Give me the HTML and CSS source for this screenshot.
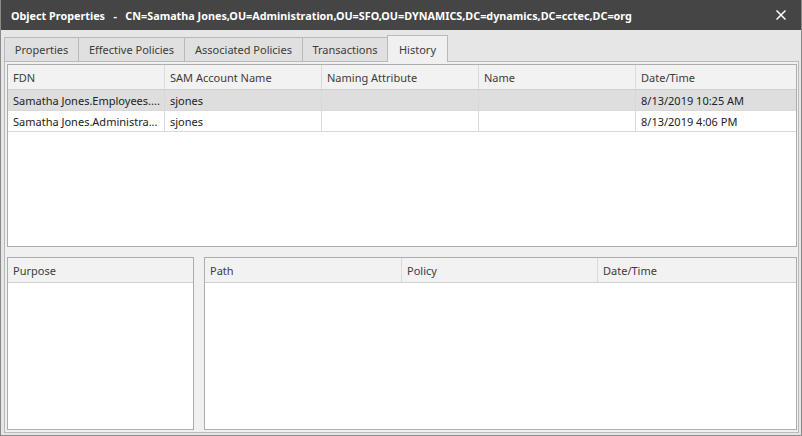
FILE: index.html
```html
<html>
	<head>
		<title>Object Properties</title>
		<link rel="stylesheet" href="styles.css">
	</head>
	<body>
		<div class="window">
			<div class="titlebar">
				<span class="title">Object Properties&nbsp;&nbsp;&nbsp;-&nbsp;&nbsp;&nbsp;CN=Samatha Jones,OU=Administration,OU=SFO,OU=DYNAMICS,DC=dynamics,DC=cctec,DC=org</span>
				<span class="close"><svg width="10" height="10" viewBox="0 0 10 10"><path d="M0.5 0.5 L9.5 9.5 M9.5 0.5 L0.5 9.5" stroke="#fff" stroke-width="1.5"/></svg></span>
			</div>
			<nav class="tabs">
				<a href="#" class="tab t1">Properties</a>
				<a href="#" class="tab t2">Effective Policies</a>
				<a href="#" class="tab t3">Associated Policies</a>
				<a href="#" class="tab t4">Transactions</a>
				<a href="#" class="tab t5 active">History</a>
			</nav>
			<div class="tab-panel">
				<div class="grid history">
					<div class="row head">
						<div class="cell c1">FDN</div>
						<div class="cell c2">SAM Account Name</div>
						<div class="cell c3">Naming Attribute</div>
						<div class="cell c4">Name</div>
						<div class="cell c5">Date/Time</div>
					</div>
					<div class="row selected">
						<div class="cell c1">Samatha Jones.Employees....</div>
						<div class="cell c2">sjones</div>
						<div class="cell c3"></div>
						<div class="cell c4"></div>
						<div class="cell c5">8/13/2019 10:25 AM</div>
					</div>
					<div class="row">
						<div class="cell c1">Samatha Jones.Administra...</div>
						<div class="cell c2">sjones</div>
						<div class="cell c3"></div>
						<div class="cell c4"></div>
						<div class="cell c5">8/13/2019 4:06 PM</div>
					</div>
				</div>
				<div class="lower">
					<div class="grid purpose">
						<div class="row head small">
							<div class="cell p1">Purpose</div>
						</div>
					</div>
					<div class="grid paths">
						<div class="row head small">
							<div class="cell q1">Path</div>
							<div class="cell q2">Policy</div>
							<div class="cell q3">Date/Time</div>
						</div>
					</div>
				</div>
			</div>
		</div>
	</body>
</html>
```

FILE: styles.css
```css
body {
	margin: 0px;
	padding: 0px;
	font-family: "Noto Sans", "Open Sans", sans-serif;
	font-size: 11px;
	color: #333;
	background: #e6e6e6;
}

.window {
	width: 800px;
	height: 435px;
	background: #e6e6e6;
	border-left: 1px solid #8a8a8a;
	border-right: 1px solid #8a8a8a;
	border-bottom: 1px solid #8a8a8a;
	overflow: hidden;
}

.titlebar {
	height: 30px;
	background: #454545;
	color: white;
	display: flex;
	align-items: center;
	padding-left: 11px;
	margin: 0 -1px;
}

.title {
	flex: 1;
	font-size: 10.8px;
	font-weight: bold;
	white-space: nowrap;
}

.close {
	display: flex;
	width: 10px;
	margin-right: 16px;
}

.tabs {
	display: flex;
	align-items: flex-end;
	height: 31px;
	padding-left: 3px;
}

.tab {
	display: block;
	height: 23px;
	line-height: 23px;
	background: #e0e0e0;
	border: 1px solid #b9b9b9;
	border-bottom: none;
	border-left: none;
	text-decoration: none;
	color: #3c3c3c;
	text-align: center;
}

.tab.t1 {
	border-left: 1px solid #b9b9b9;
	width: 73px;
}

.tab.t2 { width: 105px; }
.tab.t3 { width: 117px; }
.tab.t4 { width: 84px; }

.tab.active {
	height: 26px;
	line-height: 28px;
	width: 59px;
	background: #f0f0f0;
	border-left: 1px solid #b9b9b9;
	margin-left: -1px;
	margin-bottom: -1px;
	position: relative;
}

.tab-panel {
	margin-left: 3px;
	width: 790px;
	height: 366px;
	background: #f0f0f0;
	border: 1px solid #b9b9b9;
	padding: 2px 1px 2px 2px;
	display: flex;
	flex-direction: column;
	gap: 10px;
}

.grid {
	background: white;
	border: 1px solid #adadad;
	box-sizing: border-box;
}

.grid.history {
	height: 183px;
	flex-shrink: 0;
}

.row {
	display: flex;
	height: 20px;
	border-bottom: 1px solid #d9d9d9;
}

.row.head {
	height: 24px;
	background: #f2f2f2;
	border-bottom: 1px solid #cfcfcf;
}

.row.selected {
	background: #dedede;
}

.cell {
	box-sizing: border-box;
	border-right: 1px solid #d9d9d9;
	padding-left: 5px;
	display: flex;
	align-items: center;
	white-space: nowrap;
	overflow: hidden;
	color: #222;
}

.head .cell {
	color: #3c3c3c;
	border-right-color: #dadada;
}

.c1, .c2, .c3, .c4 { width: 157px; }
.c5 { flex: 1; border-right: none; }

.lower {
	flex: 1;
	display: flex;
	gap: 10px;
}

.grid.purpose {
	width: 187px;
}

.grid.paths {
	flex: 1;
}

.p1 { flex: 1; border-right: none; }
.q1 { width: 197px; }
.q2 { width: 196px; }
.q3 { flex: 1; border-right: none; }
```
